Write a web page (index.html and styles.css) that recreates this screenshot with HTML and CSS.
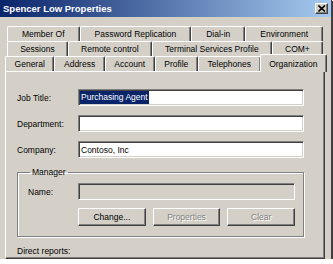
FILE: index.html
```html
<!DOCTYPE html>
<html lang="en">
<head>
    <meta charset="UTF-8">
    <title>Spencer Low Properties</title>
    <link rel="stylesheet" href="styles.css">
</head>
<body>
    <div class="window">
        <div class="titlebar">
            <span class="title">Spencer Low Properties</span>
            <span class="close">
                <svg width="8" height="7" viewBox="0 0 8 7"><path d="M0.5 0.5 L7 6.5 M7 0.5 L0.5 6.5" stroke="#000" stroke-width="1.6"/></svg>
            </span>
        </div>

        <div class="tabs">
            <div class="tab-row back">
                <span class="tab">Member Of</span>
                <span class="tab">Password Replication</span>
                <span class="tab">Dial-in</span>
                <span class="tab">Environment</span>
            </div>
            <div class="tab-row back">
                <span class="tab">Sessions</span>
                <span class="tab">Remote control</span>
                <span class="tab">Terminal Services Profile</span>
                <span class="tab">COM+</span>
            </div>
            <div class="tab-row front">
                <span class="tab">General</span>
                <span class="tab">Address</span>
                <span class="tab">Account</span>
                <span class="tab">Profile</span>
                <span class="tab">Telephones</span>
                <span class="tab selected">Organization</span>
            </div>
        </div>

        <div class="panel">
            <div class="field">
                <label>Job Title:</label>
                <div class="input"><span class="selection">Purchasing Agent</span></div>
            </div>
            <div class="field">
                <label>Department:</label>
                <div class="input"></div>
            </div>
            <div class="field">
                <label>Company:</label>
                <div class="input">Contoso, Inc</div>
            </div>

            <fieldset class="group">
                <legend>Manager</legend>
                <div class="field">
                    <label class="short">Name:</label>
                    <div class="input disabled"></div>
                </div>
                <div class="buttons">
                    <span class="btn">Change...</span>
                    <span class="btn off">Properties</span>
                    <span class="btn off">Clear</span>
                </div>
            </fieldset>

            <div class="direct">Direct reports:</div>
        </div>
    </div>
</body>
</html>
```

FILE: styles.css
```css
body {
    margin: 0;
    background: #fff;
    font-family: "Liberation Sans", Arial, sans-serif;
    font-size: 8.5px;
    color: #000;
}
.window {
    width: 331px;
    height: 259px;
    background: #d4d0c8;
    border-right: 1px solid #404040;
    box-shadow: 1px 1px 0 #404040, 3px 3px 3px rgba(0, 0, 0, 0.35);
    overflow: hidden;
}
.titlebar {
    height: 17px;
    display: flex;
    align-items: center;
    justify-content: space-between;
    padding: 0 3px 0 3px;
    background: linear-gradient(to right, #0a246a, #a6caf0);
}
.title {
    color: #fff;
    font-weight: bold;
    font-size: 9.5px;
}
.close {
    width: 11px;
    height: 9px;
    display: flex;
    align-items: center;
    justify-content: center;
    background: #d4d0c8;
    border: 1px solid;
    border-color: #fff #404040 #404040 #fff;
    box-shadow: inset -1px -1px 0 #808080;
}

/* tabs */
.tabs {
    margin-top: 9px;
}
.tab-row {
    display: flex;
    height: 15px;
}
.tab-row.back {
    margin: 0 8px 0 7px;
}
.tab-row.front {
    margin: 0 6px 0 5px;
    position: relative;
    z-index: 1;
}
.tab {
    flex: 1 1 auto;
    display: flex;
    align-items: center;
    justify-content: center;
    border-top: 1px solid #fff;
    border-left: 1px solid #fff;
    border-right: 1px solid #404040;
    box-shadow: inset -1px 0 0 #808080;
    border-radius: 2px 2px 0 0;
    white-space: nowrap;
}
.tab.selected {
    margin: -2px -2px -1px -1px;
    height: 17px;
    background: #d4d0c8;
}

/* panel */
.panel {
    margin: 0 6px 0 5px;
    height: 188px;
    box-sizing: border-box;
    border: 1px solid;
    border-color: #fff #404040 #404040 #fff;
    box-shadow: inset -1px -1px 0 #808080;
    padding: 17px 20px 0 11px;
}
.field {
    display: flex;
    align-items: center;
    margin-bottom: 9px;
}
.field label {
    width: 61px;
    flex: none;
}
.field label.short {
    width: 50px;
}
.input {
    flex: 1;
    height: 17px;
    box-sizing: border-box;
    background: #fff;
    border: 1px solid;
    border-color: #808080 #fff #fff #808080;
    box-shadow: inset 1px 1px 0 #404040, inset -1px -1px 0 #d4d0c8;
    padding: 0 2px;
    display: flex;
    align-items: center;
}
.input.disabled {
    background: #d4d0c8;
}
.selection {
    background: #0a246a;
    color: #fff;
    line-height: 13px;
    padding: 0 1px;
    margin-left: -1px;
}

.group {
    margin: 6px 0 0;
    padding: 6px 8px 10px 10px;
    border: 1px solid #808080;
    box-shadow: inset 1px 1px 0 #fff, 1px 1px 0 #fff;
}
.group legend {
    padding: 0 2px;
    margin-left: 2px;
}
.group .field {
    margin-bottom: 8px;
}
.buttons {
    display: flex;
    gap: 7px;
    margin-left: 50px;
}
.btn {
    flex: 1;
    height: 18px;
    box-sizing: border-box;
    display: flex;
    align-items: center;
    justify-content: center;
    border: 1px solid;
    border-color: #fff #404040 #404040 #fff;
    box-shadow: inset -1px -1px 0 #808080;
}
.btn.off {
    color: #808080;
    text-shadow: 1px 1px 0 #fff;
}
.direct {
    margin-top: 9px;
}
```
